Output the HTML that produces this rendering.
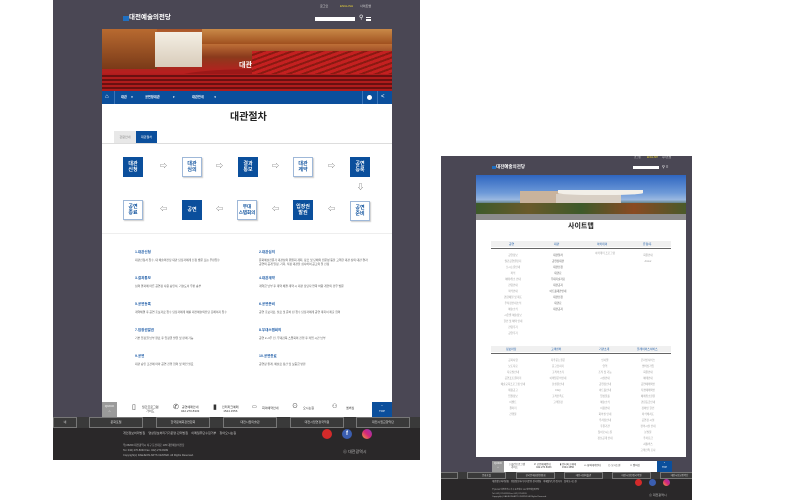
<!DOCTYPE html>
<html><head><meta charset="utf-8">
<style>
*{margin:0;padding:0;box-sizing:border-box}
body{width:800px;height:500px;background:#fff;position:relative;overflow:hidden;font-family:"Liberation Sans","Noto Sans CJK KR",sans-serif}
div,span{position:absolute}
.t{white-space:nowrap;line-height:1}
.fb{width:20px;height:20px;font-size:5px;line-height:6px;text-align:center;display:flex;align-items:center;justify-content:center;font-weight:bold;position:absolute}
.fill{background:#0b4f9c;color:#fff}
.out{background:#fff;border:1px solid #9fb8d8;color:#0b4f9c;box-shadow:1px 1px 1px #ccc}
.ar{font-size:7px;color:#555}
.h{font-size:3.5px;color:#1b5aa6;font-weight:bold}
.b{font-size:2.8px;color:#555;line-height:4px;width:110px;white-space:normal}
.fr{border:1px solid #777;height:11px;font-size:3px;color:#ddd;text-align:center;line-height:9px}
.si{font-size:2.6px;color:#999;text-align:center;width:50px;margin-left:-25px}
</style></head><body>

<!-- LEFT MOCKUP -->
<div style="left:53px;top:0;width:367px;height:460px;background:#4a4754"></div>
<div class="t" style="left:320px;top:5px;font-size:3px;color:#ddd">로그인</div>
<div class="t" style="left:340px;top:5px;font-size:3px;color:#e8d23a">ENGLISH</div>
<div class="t" style="left:360px;top:5px;font-size:3px;color:#ddd">사이트맵</div>
<div style="left:123px;top:16px;width:6px;height:5px;background:#1f6fc0"></div>
<div class="t" style="left:129px;top:15px;font-size:6.5px;color:#fff;font-weight:bold">대전예술의전당</div>
<div style="left:315px;top:17px;width:40px;height:4px;background:#fff"></div>
<div class="t" style="left:359px;top:15px;font-size:6px;color:#fff">⚲</div>
<div style="left:366px;top:17px;width:5px;height:4px;border-top:1px solid #fff;border-bottom:1px solid #fff"></div>
<div style="left:366px;top:19px;width:5px;height:1px;background:#fff"></div>

<div style="left:102px;top:29px;width:290px;height:62px;background:linear-gradient(180deg,#a8552a 0%,#c87a3c 20%,#8a3a1c 45%,#b81f1f 70%,#7a1414 100%);overflow:hidden">
<div style="left:0;top:0;width:55px;height:40px;background:linear-gradient(180deg,#b86a30,#7a3a18)"></div>
<div style="left:53px;top:3px;width:47px;height:35px;background:linear-gradient(180deg,#f4eee4,#d8ccba)"></div>
<div style="left:100px;top:0;width:190px;height:15px;background:linear-gradient(180deg,#c98a48,#a0501f)"></div>
<div style="left:70px;top:40px;width:170px;height:20px;border-radius:50%;background:#9c1818"></div>
<div style="left:150px;top:22px;width:160px;height:40px;background:repeating-linear-gradient(160deg,#c42020 0 3px,#8a1a12 3px 5px)"></div>
<div style="left:0;top:45px;width:290px;height:17px;background:repeating-linear-gradient(0deg,#b01c1c 0 2px,#6a1010 2px 4px)"></div>
</div>
<div class="t" style="left:239px;top:62px;font-size:7px;color:#fff;font-weight:bold">대관</div>

<div style="left:102px;top:91px;width:290px;height:13px;background:#0b4f9c"></div>
<div class="t" style="left:105px;top:94px;font-size:6px;color:#fff">⌂</div>
<div style="left:114px;top:91px;width:1px;height:13px;background:#3a74b8"></div>
<div class="t" style="left:121px;top:96px;font-size:3.2px;color:#fff;font-weight:bold">대관 &nbsp;&nbsp;&nbsp;&nbsp;▾</div>
<div class="t" style="left:145px;top:96px;font-size:3.2px;color:#fff;font-weight:bold">공연장대관 &nbsp;&nbsp;&nbsp;&nbsp;&nbsp;&nbsp;&nbsp;&nbsp;&nbsp;&nbsp;&nbsp;&nbsp;&nbsp;&nbsp;▾</div>
<div class="t" style="left:192px;top:96px;font-size:3.2px;color:#fff;font-weight:bold">대관안내 &nbsp;&nbsp;&nbsp;&nbsp;&nbsp;&nbsp;&nbsp;&nbsp;&nbsp;&nbsp;&nbsp;▾</div>
<div style="left:362px;top:91px;width:1px;height:13px;background:#3a74b8"></div>
<div style="left:377px;top:91px;width:1px;height:13px;background:#3a74b8"></div>
<div style="left:367px;top:95px;width:5px;height:5px;border-radius:50%;background:#fff"></div>
<div class="t" style="left:381px;top:94px;font-size:6px;color:#fff">&lt;</div>

<div style="left:102px;top:104px;width:290px;height:298px;background:#fff"></div>
<div class="t" style="left:230px;top:113px;font-size:10px;color:#222;font-weight:bold">대관절차</div>
<div style="left:114px;top:131px;width:22px;height:12px;background:#e8e8e8;font-size:3px;color:#888;text-align:center;line-height:12px">관람안내</div>
<div style="left:136px;top:131px;width:21px;height:12px;background:#0b4f9c;font-size:3px;color:#fff;text-align:center;line-height:12px">대관절차</div>
<div style="left:102px;top:143px;width:290px;height:1px;background:#ddd"></div>

<div class="fb fill" style="left:123px;top:157px">대관<br>신청</div>
<div class="fb out" style="left:182px;top:157px">대관<br>심의</div>
<div class="fb fill" style="left:238px;top:157px">결과<br>통보</div>
<div class="fb out" style="left:293px;top:157px">대관<br>계약</div>
<div class="fb fill" style="left:350px;top:157px">공연<br>등록</div>
<div class="t ar" style="left:160px;top:163px">⇨</div>
<div class="t ar" style="left:216px;top:163px">⇨</div>
<div class="t ar" style="left:272px;top:163px">⇨</div>
<div class="t ar" style="left:328px;top:163px">⇨</div>
<div class="t ar" style="left:357px;top:184px">⇩</div>
<div class="fb out" style="left:123px;top:200px">공연<br>종료</div>
<div class="fb fill" style="left:182px;top:200px">공연</div>
<div class="fb out" style="left:237px;top:200px;font-size:4.5px">무대<br>스텝회의</div>
<div class="fb fill" style="left:293px;top:200px">입장권<br>발권</div>
<div class="fb out" style="left:350px;top:201px">공연<br>준비</div>
<div class="t ar" style="left:160px;top:206px">⇦</div>
<div class="t ar" style="left:216px;top:206px">⇦</div>
<div class="t ar" style="left:272px;top:206px">⇦</div>
<div class="t ar" style="left:328px;top:206px">⇦</div>
<div style="left:102px;top:233px;width:290px;height:1px;background:#eee"></div>

<div class="t h" style="left:135px;top:251px">1.대관신청</div>
<div class="b" style="left:135px;top:258px">대관신청서 접수, 대 예술의전당 대관 담당자에게 신청 방문 또는 우편접수</div>
<div class="t h" style="left:259px;top:251px">2.대관심의</div>
<div class="b" style="left:259px;top:258px">문화예술전문가 대관심의 위원회 개최, 장르 및 단체의 전문성 등을 고려한 대관 심의 대관 결과 공연의 공개 일정, 기획, 적정 대관을 심사하여 공고의 일 선정</div>
<div class="t h" style="left:135px;top:277px">3.결과통보</div>
<div class="b" style="left:135px;top:284px">심의 결과에 따른 공연장 사용 승인서, 기술도서 우편 송부</div>
<div class="t h" style="left:259px;top:277px">4.대관계약</div>
<div class="b" style="left:259px;top:284px">계약금 납부 후 계약 체결 계약 시 대관 담당자 연락 바람 개인의 경우 방문</div>
<div class="t h" style="left:135px;top:303px">5.공연등록</div>
<div class="b" style="left:135px;top:310px">계약체결 후 공연 홍보자료 접수 담당자에게 예를 대전예술의전당 홈페이지 접수</div>
<div class="t h" style="left:259px;top:303px">6.공연준비</div>
<div class="b" style="left:259px;top:310px">공연 홍보자료, 실료 및 준비 된 접수 담당자에게 공연 계획서 제출 협의</div>
<div class="t h" style="left:135px;top:329px">7.입장권발권</div>
<div class="b" style="left:135px;top:336px">기본 입장권 납부 완료 후 입장권 발권 및 판매 가능</div>
<div class="t h" style="left:259px;top:329px">8.무대스텝회의</div>
<div class="b" style="left:259px;top:336px">공연 2~3주 전, 무대감독 스텝회의 진행 후 작업 시간 납부</div>
<div class="t h" style="left:135px;top:355px">9.공연</div>
<div class="b" style="left:135px;top:362px">대관 승인 조건에 따라 공연 진행 협의 및 확인 필요</div>
<div class="t h" style="left:259px;top:355px">10.공연종료</div>
<div class="b" style="left:259px;top:362px">공연장 원래, 예술료 정산 및 보증금 반환</div>

<!-- quick bar left -->
<div style="left:102px;top:402px;width:290px;height:15px;background:#fff"></div>
<div style="left:102px;top:402px;width:15px;height:15px;background:#9a9a9a;font-size:3px;color:#fff;text-align:center;line-height:5px;padding-top:2px">QUICK<br>⌂</div>
<div class="t" style="left:132px;top:404px;font-size:7px;color:#333">▯</div>
<div class="t" style="left:142px;top:405px;font-size:3px;color:#333;text-align:center;line-height:4px">월간프로그램<br>가이드</div>
<div class="t" style="left:173px;top:404px;font-size:7px;color:#333">✆</div>
<div class="t" style="left:181px;top:405px;font-size:3px;color:#333;text-align:center;line-height:4px">공연예매안내<br>042.270.8333</div>
<div class="t" style="left:213px;top:404px;font-size:7px;color:#333">▮</div>
<div class="t" style="left:222px;top:405px;font-size:3px;color:#333;text-align:center;line-height:4px">인터파크예매<br>1544.1556</div>
<div class="t" style="left:252px;top:405px;font-size:5px;color:#333">▭</div>
<div class="t" style="left:262px;top:407px;font-size:3px;color:#333">회의예약안내</div>
<div class="t" style="left:292px;top:404px;font-size:6px;color:#333">⊙</div>
<div class="t" style="left:303px;top:407px;font-size:3px;color:#333">오시는길</div>
<div class="t" style="left:332px;top:404px;font-size:6px;color:#333">⚇</div>
<div class="t" style="left:346px;top:407px;font-size:3px;color:#333">멤버십</div>
<div style="left:372px;top:402px;width:20px;height:15px;background:#0b4f9c;font-size:3px;color:#fff;text-align:center;line-height:5px;padding-top:2px">^<br>TOP</div>

<div style="left:53px;top:417px;width:367px;height:11px;background:#3a3a3a"></div>
<div class="fr" style="left:53px;top:417px;width:24px">네</div>
<div class="fr" style="left:89px;top:417px;width:54px">문화포털</div>
<div class="fr" style="left:156px;top:417px;width:54px">한국문예회관연합회</div>
<div class="fr" style="left:223px;top:417px;width:54px">대전시립미술관</div>
<div class="fr" style="left:290px;top:417px;width:54px">대전시립연정국악원</div>
<div class="fr" style="left:356px;top:417px;width:54px">대전시립교향악단</div>
<div style="left:53px;top:428px;width:367px;height:32px;background:#2a2829"></div>
<div class="t" style="left:123px;top:432px;font-size:3px;color:#ccc">개인정보처리방침 &nbsp;&nbsp; 영상정보처리기기운영·관리방침 &nbsp;&nbsp; 이메일무단수집거부 &nbsp;&nbsp; 찾아오시는길</div>
<div style="left:322px;top:429px;width:10px;height:10px;border-radius:50%;background:#d32a2a"></div>
<div style="left:342px;top:429px;width:10px;height:10px;border-radius:50%;background:#3b5eb0;font-size:6px;color:#fff;text-align:center;line-height:10px;font-weight:bold">f</div>
<div style="left:362px;top:429px;width:10px;height:10px;border-radius:50%;background:linear-gradient(45deg,#f7a13a,#d3267a,#8a3ab9)"></div>
<div class="t" style="left:123px;top:443px;font-size:2.6px;color:#bbb;line-height:5px">우)35209 대전광역시 서구 둔산대로 135 대전예술의전당<br>Tel. 042) 270-8333 Fax. 042) 270-8199<br>Copyright(c) DAEJEON ARTS CENTER. All Rights Reserved.</div>
<div class="t" style="left:343px;top:450px;font-size:4px;color:#bbb">❀ 대전광역시</div>

<!-- RIGHT MOCKUP -->
<div style="left:441px;top:156px;width:251px;height:344px;background:#4a4754;overflow:hidden">
<div style="left:0;top:316px;width:251px;height:7px;background:#3a3a3a"></div>
<div class="fr" style="left:-2px;top:316px;width:19px;height:7px"></div>
<div class="fr" style="left:26px;top:316px;width:39px;height:7px;line-height:5px;font-size:2.4px">문화포털</div>
<div class="fr" style="left:75px;top:316px;width:39px;height:7px;line-height:5px;font-size:2.4px">한국문예회관연합회</div>
<div class="fr" style="left:123px;top:316px;width:39px;height:7px;line-height:5px;font-size:2.4px">대전시립미술관</div>
<div class="fr" style="left:171px;top:316px;width:39px;height:7px;line-height:5px;font-size:2.4px">대전시립연정국악원</div>
<div class="fr" style="left:219px;top:316px;width:39px;height:7px;line-height:5px;font-size:2.4px">대전시립교향악단</div>
</div>
<div class="t" style="left:634px;top:157px;font-size:2.5px;color:#ddd">로그인</div>
<div class="t" style="left:647px;top:157px;font-size:2.5px;color:#e8d23a">ENGLISH</div>
<div class="t" style="left:662px;top:157px;font-size:2.5px;color:#ddd">사이트맵</div>
<div style="left:492px;top:166px;width:4px;height:3px;background:#1f6fc0"></div>
<div class="t" style="left:496px;top:165px;font-size:4.5px;color:#fff;font-weight:bold">대전예술의전당</div>
<div style="left:633px;top:166px;width:26px;height:3px;background:#fff"></div>
<div class="t" style="left:662px;top:165px;font-size:4px;color:#fff">⚲ ≡</div>

<div style="left:476px;top:175px;width:210px;height:45px;background:linear-gradient(180deg,#2f66c0 0%,#6e9ad8 40%,#9ab8e0 55%,#2f4a2c 70%,#3a4f2e 88%,#888 100%);overflow:hidden">
<div style="left:44px;top:16px;width:70px;height:18px;background:#c9b39c"></div>
<div style="left:80px;top:19px;width:65px;height:15px;background:#d8cfc4"></div>
<div style="left:82px;top:15px;width:85px;height:5px;background:#f2efe8;border-radius:0 0 40% 40%"></div>
<div style="left:0;top:28px;width:210px;height:12px;background:linear-gradient(90deg,#3d5a2a,#6a5a2a,#3d5a2a,#8a4a22,#4a5a2a)"></div>
<div style="left:0;top:39px;width:210px;height:6px;background:#8c8c8c"></div>
</div>

<div style="left:476px;top:220px;width:210px;height:237px;background:#fff"></div>
<div class="t" style="left:568px;top:223px;font-size:7px;color:#222;font-weight:bold">사이트맵</div>

<div style="left:491px;top:241px;width:180px;height:6px;background:#f0f0f0"></div>
<div style="left:491px;top:248px;width:180px;height:1px;background:#666"></div>
<div class="t" style="left:509px;top:243px;font-size:2.8px;color:#1b5aa6">공연</div>
<div class="t" style="left:554px;top:243px;font-size:2.8px;color:#1b5aa6">대관</div>
<div class="t" style="left:597px;top:243px;font-size:2.8px;color:#1b5aa6">아카데미</div>
<div class="t" style="left:643px;top:243px;font-size:2.8px;color:#1b5aa6">유형/후</div>

<div class="si t" style="left:513px;top:253px;line-height:6px">공연정보<br>월간공연캘린더<br>오시는길안내<br>좌석<br>예매/취소 안내<br>관람안내<br>좌석안내<br>관람예절 및 제도<br>주차장안내소식<br>예술소식<br>시즌별 예술정보<br>할인 및 혜택 안내<br>관람후기<br>공연후기</div>
<div class="si t" style="left:558px;top:253px;line-height:6px;color:#555">대관절차<br>공연장대관<br>대관신청<br>대관료<br>무대기술자료<br>대관공지<br>아트홀대관안내<br>대관신청<br>대관료<br>대관공지</div>
<div class="si t" style="left:605px;top:253px">아카데미 프로그램</div>
<div class="si t" style="left:648px;top:253px;line-height:6px">회원안내<br>Artour</div>

<div style="left:491px;top:346px;width:180px;height:6px;background:#f0f0f0"></div>
<div style="left:491px;top:353px;width:180px;height:1px;background:#666"></div>
<div class="t" style="left:506px;top:348px;font-size:2.8px;color:#1b5aa6">정보마당</div>
<div class="t" style="left:551px;top:348px;font-size:2.8px;color:#1b5aa6">고객센터</div>
<div class="t" style="left:599px;top:348px;font-size:2.8px;color:#1b5aa6">기관소개</div>
<div class="t" style="left:637px;top:348px;font-size:2.8px;color:#1b5aa6">플레이어스서비스</div>

<div class="si t" style="left:513px;top:358px;line-height:6px">공지사항<br>보도자료<br>자료실안내<br>공연포토갤러리<br>예술교육프로그램 안내<br>채용공고<br>입찰정보<br>이벤트<br>갤러리<br>간행물</div>
<div class="si t" style="left:558px;top:358px;line-height:6px">자주묻는질문<br>묻고답하기<br>고객의소리<br>이메일문의안내<br>분실물안내<br>FAQ<br>고객만족도<br>고객헌장</div>
<div class="si t" style="left:605px;top:358px;line-height:6px">인사말<br>연혁<br>조직 및 기능<br>시설안내<br>공연장안내<br>아트홀안내<br>앙상블홀<br>예술소식<br>이용안내<br>회의실 안내<br>주차장안내<br>후원기관<br>찾아오시는길<br>정보공개 안내</div>
<div class="si t" style="left:648px;top:358px;line-height:6px">온라인서비스<br>멤버십가입<br>회원안내<br>예매안내<br>공연예매확인<br>티켓예매확인<br>예매취소환불<br>관람등급안내<br>장애인 할인<br>좌석배치도<br>공연장 시설<br>편의시설 안내<br>분실물<br>주차요금<br>셔틀버스<br>고객만족 조사</div>

<div style="left:492px;top:461px;width:180px;height:11px;background:#fff"></div>
<div style="left:492px;top:461px;width:12px;height:11px;background:#9a9a9a;font-size:2.5px;color:#fff;text-align:center;line-height:4px;padding-top:1px">QUICK<br>⌂</div>
<div class="t" style="left:509px;top:463px;font-size:2.5px;color:#333;line-height:3px">▯ 월간프로그램<br>&nbsp;&nbsp;&nbsp;가이드</div>
<div class="t" style="left:534px;top:463px;font-size:2.5px;color:#333;line-height:3px">✆ 공연예매안내<br>&nbsp;&nbsp;&nbsp;042.270.8333</div>
<div class="t" style="left:560px;top:463px;font-size:2.5px;color:#333;line-height:3px">▮ 인터파크예매<br>&nbsp;&nbsp;&nbsp;1544.1556</div>
<div class="t" style="left:584px;top:465px;font-size:2.5px;color:#333">▭ 회의예약안내</div>
<div class="t" style="left:608px;top:465px;font-size:2.5px;color:#333">⊙ 오시는길</div>
<div class="t" style="left:630px;top:465px;font-size:2.5px;color:#333">⚇ 멤버십</div>
<div style="left:657px;top:461px;width:15px;height:11px;background:#0b4f9c;font-size:2.5px;color:#fff;text-align:center;line-height:4px;padding-top:1px">^<br>TOP</div>

<div style="left:441px;top:479px;width:251px;height:21px;background:#2a2829"></div>
<div class="t" style="left:492px;top:481px;font-size:2.3px;color:#ccc">개인정보처리방침 &nbsp; 영상정보처리기기운영·관리방침 &nbsp; 이메일무단수집거부 &nbsp; 찾아오시는길</div>
<div style="left:635px;top:479px;width:7px;height:7px;border-radius:50%;background:#d32a2a"></div>
<div style="left:649px;top:479px;width:7px;height:7px;border-radius:50%;background:#3b5eb0"></div>
<div style="left:663px;top:479px;width:7px;height:7px;border-radius:50%;background:linear-gradient(45deg,#f7a13a,#d3267a,#8a3ab9)"></div>
<div class="t" style="left:492px;top:489px;font-size:2px;color:#bbb;line-height:3.5px">우)35209 대전광역시 서구 둔산대로 135 대전예술의전당<br>Tel. 042) 270-8333 Fax. 042) 270-8199<br>Copyright(c) DAEJEON ARTS CENTER. All Rights Reserved.</div>
<div class="t" style="left:649px;top:494px;font-size:3px;color:#bbb">❀ 대전광역시</div>
</body></html>
